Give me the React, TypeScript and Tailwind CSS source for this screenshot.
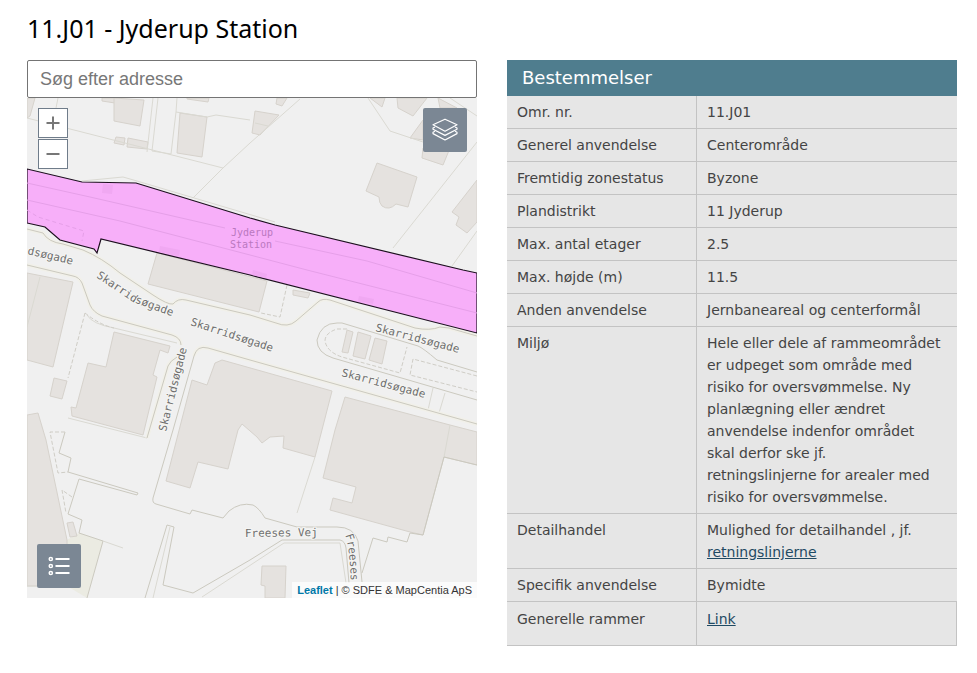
import React from 'react';

type Row = { label: string; value: React.ReactNode };

const rows: Row[] = [
  { label: 'Omr. nr.', value: '11.J01' },
  { label: 'Generel anvendelse', value: 'Centerområde' },
  { label: 'Fremtidig zonestatus', value: 'Byzone' },
  { label: 'Plandistrikt', value: '11 Jyderup' },
  { label: 'Max. antal etager', value: '2.5' },
  { label: 'Max. højde (m)', value: '11.5' },
  { label: 'Anden anvendelse', value: 'Jernbaneareal og centerformål' },
  {
    label: 'Miljø',
    value: (
      <>
        Hele eller dele af rammeområdet er udpeget som område med risiko for oversvømmelse. Ny planlægning eller ændret
        anvendelse indenfor området skal derfor ske jf.
        <br />
        retningslinjerne for arealer med risiko for oversvømmelse.
      </>
    ),
  },
  {
    label: 'Detailhandel',
    value: (
      <>
        Mulighed for detailhandel , jf. <a href="#retningslinjer" className="text-[#1f4a63] underline">retningslinjerne</a>
      </>
    ),
  },
  { label: 'Specifik anvendelse', value: 'Bymidte' },
];

const buildings = [
  '27,98 35,98 30,116 27,118',
  '102,98 116,98 115,103 102,101',
  '114,98 144,100 140,126 114,121',
  '180,113 207,117 202,157 177,153',
  '187,98 209,98 208,102 187,99',
  '116,137 125,138 124,145 114,143',
  '128,138 148,142 147,149 127,147',
  '255,111 279,115 260,135 252,133',
  '277,98 287,98 282,106 276,104',
  '370,98 385,98 382,107',
  '397,98 427,98 413,116 398,108',
  '438,98 457,108 440,108',
  '410,138 423,120 423,140',
  '423,148 450,148 443,165 422,158',
  '477,180 452,212 459,217 456,225 467,233 477,222',
  '157,253 148,284 259,312 267,281',
  '293,290 310,293 308,298 293,295',
  '347,330 353,332 348,353 342,352',
  '358,332 371,336 365,359 353,356',
  '375,338 387,341 382,364 369,360',
  '27,273 73,282 53,367 27,360',
  '54,378 67,381 62,399 50,396',
  '114,332 170,346 168,353 160,350 153,375 157,377 143,435 72,416 71,407 76,408 88,363 106,367',
  '27,415 38,413 46,440 67,540 67,586 27,586',
  '67,523 73,522 77,536 70,537',
  '192,380 207,385 215,363 222,360 332,391 315,457 283,448 284,436 270,437 262,443 257,437 242,424 238,430 228,469 198,462 190,488 166,481',
  '345,397 450,425 477,432 477,465 444,457 423,535 410,532 330,510 333,498 352,503 356,487 323,478 335,430',
  '262,566 286,566 285,598 265,598 265,586 261,585',
];

const parcels = [
  'M27,118 L223,168 L193,198',
  'M223,168 L250,143 L300,99',
  'M58,98 L55,113',
  'M153,98 L147,152',
  'M158,98 L152,151 L171,154 L176,112 L177,98',
  'M176,112 L207,117 L216,115 L250,120',
  'M82,181 L123,177 L137,181 L275,222',
  'M368,98 L390,131 L423,142',
  'M450,98 L477,116',
  'M477,142 L393,248',
  'M477,231 L452,266',
  'M255,123 L268,126',
  'M40,277 L27,327',
  'M315,457 L297,513',
  'M450,425 L444,457',
  'M87,315 Q92,324 114,328 L177,343',
  'M68,418 L147,438',
  'M103,541 L123,548',
  'M433,388 L428,410',
  'M445,393 L439,413',
  'M170,527 L153,598',
  'M202,597 L284,543 L340,543 L346,583',
  'M27,586 L80,586',
];

const roads = [
  'M27,229 L43,233 Q48,242 63,244 L83,250 Q102,258 120,273 L153,295 Q168,305 173,304 Q178,298 186,300 L250,315 L276,323 Q288,328 296,321 L318,302 Q322,298 330,300 L415,328 Q430,331 440,327 L449,328 L477,336',
  'M27,265 L73,276 Q79,277 82,283 L90,305 Q93,312 102,316 L172,335 Q181,338 181,345',
  'M177,357 Q170,361 168,366 L147,438',
  'M194,356 Q197,345 208,348 L250,360 L477,424',
  'M194,356 L173,430 L153,498 Q152,503 156,504 L190,514 L192,510 L223,518 L229,511 Q240,502 253,505 Q259,508 265,518 L297,527 L337,527 Q354,527 358,541 L362,582',
  'M477,400 L333,358 Q317,353 317,340 Q321,323 337,323 L342,323 L418,346 Q423,348 437,360 L477,372',
  'M145,598 L167,525 L174,527 L163,585 L193,593 L250,560 L282,540 L340,540 Q345,541 346,548 L349,583',
  'M362,573 L373,538 L387,542 L388,537 L407,542 L410,533 L423,535 L444,457 L477,465',
  'M65,432 L59,453 L71,458 L68,472 L138,493 L137,495 L79,479',
];

const dashed = [
  'M287,285 L280,317 L261,313',
  'M85,313 L68,378',
  'M85,313 Q100,325 114,328',
  'M347,329 L337,329 Q325,333 325,341 Q327,352 342,357 L400,373 L407,347',
  'M477,376 L413,359 L410,375 L477,392',
  'M65,432 L50,432 L58,473 L68,472',
  'M72,497 L62,490 L66,513',
];

// label text runs along these lines
const labels = [
  { id: 'street-west', d: 'M27,254 L82,267', text: 'dsøgade' },
  { id: 'street-mid', d: 'M96,277 L133,302 L185,321', text: 'Skarridsøgade' },
  { id: 'street-mid-east', d: 'M190,325 L285,356', text: 'Skarridsøgade' },
  { id: 'street-north', d: 'M375,331 L470,356', text: 'Skarridsøgade' },
  { id: 'street-south', d: 'M341,376 L436,401', text: 'Skarridsøgade' },
  { id: 'street-side', d: 'M166,432 L189,340', text: 'Skarridsøgade' },
  { id: 'freeses-vej', d: 'M245,537 L325,536', text: 'Freeses Vej' },
  { id: 'freeses-south', d: 'M345,535 Q350,545 351,590', text: 'Freeses' },
];

const area =
  'M27,169 L82,182 L136,183 L250,218 L275,225 L463,270 L477,273 L477,333 L250,275 L101,239 L97,253 L94,249 L60,240 L45,227 L27,223 Z';

const StationMap: React.FC = () => (
  <svg
    viewBox="27 98 450 500"
    preserveAspectRatio="xMidYMid slice"
    className="block h-full w-full"
    role="img"
    aria-label="Kort over Jyderup Station"
  >
    <path d="M27,98 H477 V598 H27 Z" fill="#f0f0f0" />
    <path d="M79,533 L103,541 L87,598 L67,586 L67,540 Z" fill="#ebebe2" />
    <path d="M79,479 L68,514 L82,520 L79,533 L103,541 L87,598" fill="none" stroke="#cbc9bf" />
    <g fill="#e5e2df" stroke="#d6d2cc">
      {buildings.map((points) => (
        <polygon key={points} points={points} />
      ))}
      <path d="M377,163 L417,177 L408,207 L396,204 Q389,211 382,206 Q379,203 379,197 L366,191 Z" />
    </g>
    <g fill="none" stroke="#dad9d2">
      {parcels.map((d) => (
        <path key={d} d={d} />
      ))}
    </g>
    <g fill="none" stroke="#f1f0e9" strokeWidth="4">
      {roads.slice(0, 4).map((d) => (
        <path key={d} d={d} />
      ))}
    </g>
    <g fill="none" stroke="#cbc9bf">
      {roads.map((d) => (
        <path key={d} d={d} />
      ))}
    </g>
    <g fill="none" stroke="#cfcdc6" strokeDasharray="4 2">
      {dashed.map((d) => (
        <path key={d} d={d} />
      ))}
    </g>

    <path d={area} fill="#f7aff9" stroke="#1c0f1e" strokeWidth="1.2" />
    <g fill="none" stroke="#e59fe8">
      <path d="M27,183 L90,197 L225,228" />
      <path d="M27,200 L120,221 L250,255 L307,270 L477,313" />
      <path d="M275,241 L367,261 L477,293" />
      <path d="M27,210 L38,217 L84,231 L82,241" strokeDasharray="4 3" />
    </g>
    <g fill="#f0a8f2">
      <path d="M103,184 L113,185 L112,194 L102,193 Z" />
      <path d="M253,270 L267,274 L266,278 L252,275 Z" />
      <path d="M359,296 L374,299 L373,304 L358,301 Z" />
      <path d="M160,246 L180,250 L179,256 L159,252 Z" />
    </g>

    <g className="font-['DejaVu_Sans_Mono',monospace] text-[11px]" fill="#6e6e6e" stroke="#f5f5f3" strokeWidth="2" paintOrder="stroke">
      {labels.map(({ id, d, text }) => (
        <React.Fragment key={id}>
          <path id={id} d={d} fill="none" stroke="none" />
          <text>
            <textPath href={`#${id}`}>{text}</textPath>
          </text>
        </React.Fragment>
      ))}
    </g>
    <g className="font-['DejaVu_Sans_Mono',monospace] text-[10px]" fill="#ba78bf" textAnchor="middle">
      <text x="252" y="236">Jyderup</text>
      <text x="251" y="248">Station</text>
    </g>
  </svg>
);

export default function App() {
  return (
    <main className="min-h-screen bg-white pt-3 pr-5 pb-7 pl-[27px]">
      <h1 className="mb-4 font-['Trebuchet_MS','Noto_Sans',sans-serif] text-[25px] leading-8 text-black">
        11.J01 - Jyderup Station
      </h1>

      <div className="grid grid-cols-2 items-start gap-[30px]">
        <section className="font-['Liberation_Sans',Arial,sans-serif]">
          <input
            type="text"
            aria-label="Søg efter adresse"
            placeholder="Søg efter adresse"
            className="block h-[38px] w-full rounded-[2px] border border-[#747474] bg-white px-3 text-lg text-[#333] placeholder:text-[#777]"
          />
          <div className="relative h-[500px] overflow-hidden bg-[#f0f0f0]">
            <StationMap />

            <div className="absolute top-2.5 left-[11px] flex flex-col gap-px">
              <button aria-label="Zoom ind" className="flex h-[30px] w-[30px] items-center justify-center border border-[#6f7c8a] bg-white">
                <svg width="14" height="14" viewBox="0 0 14 14" stroke="#777" strokeWidth="2">
                  <path d="M0.5 7H13.5M7 0.5V13.5" />
                </svg>
              </button>
              <button aria-label="Zoom ud" className="flex h-[30px] w-[30px] items-center justify-center border border-[#6f7c8a] bg-white">
                <svg width="14" height="14" viewBox="0 0 14 14" stroke="#777" strokeWidth="2">
                  <path d="M0.5 7H13.5" />
                </svg>
              </button>
            </div>

            <button aria-label="Kortlag" className="absolute top-2.5 right-2.5 flex h-11 w-11 items-center justify-center rounded-[2px] bg-[#7b8794]">
              <svg width="26" height="24" viewBox="0 0 26 24" fill="none" stroke="#fff" strokeWidth="1.2" strokeLinejoin="round">
                <path d="M13 1.2L25 6.8L13 13.2L1 6.8Z" />
                <path d="M3 9L1 10V11.2L13 17.4L25 11.2V10L23 9" />
                <path d="M3 13.2L1 14.2V15.6L13 22L25 15.6V14.2L23 13.2" />
              </svg>
            </button>

            <button aria-label="Signaturforklaring" className="absolute bottom-2.5 left-2.5 flex h-11 w-11 items-center justify-center rounded-[2px] bg-[#7b8794]">
              <svg width="22" height="20" viewBox="0 0 22 20" fill="none" stroke="#fff">
                <g strokeWidth="1.5">
                  <circle cx="2.8" cy="3" r="1.6" />
                  <circle cx="2.8" cy="10" r="1.6" />
                  <circle cx="2.8" cy="17" r="1.6" />
                </g>
                <path d="M7.5 3H21.5M7.5 10H21.5M7.5 17H21.5" strokeWidth="2" />
              </svg>
            </button>

            <div className="absolute right-0 bottom-0 bg-white/70 px-[5px] text-[11px] leading-4 text-[#333]">
              <a href="#leaflet" className="font-bold text-[#0078a8]">Leaflet</a> | © SDFE &amp; MapCentia ApS
            </div>
          </div>
        </section>

        <table className="w-full table-fixed border-separate border-spacing-0 bg-[#e6e6e6] font-[Verdana,'DejaVu_Sans',sans-serif] text-sm leading-[22px] text-[#444]">
          <colgroup>
            <col className="w-[190px]" />
            <col />
          </colgroup>
          <thead>
            <tr>
              <th colSpan={2} className="h-9 bg-[#4f7d8e] px-[15px] text-left text-lg leading-6 font-normal text-white">
                Bestemmelser
              </th>
            </tr>
          </thead>
          <tbody>
            {rows.map((row) => (
              <tr key={row.label}>
                <th scope="row" className="border-r border-b border-[#c3c3c3] px-2.5 py-[5px] text-left align-top font-normal">
                  {row.label}
                </th>
                <td className="border-b border-[#c3c3c3] py-[5px] pr-3.5 pl-2.5 align-top">{row.value}</td>
              </tr>
            ))}
            <tr>
              <th scope="row" className="h-11 border-r border-b border-[#c3c3c3] px-2.5 py-1.5 text-left align-top font-normal">
                Generelle rammer
              </th>
              <td className="border-r border-b border-[#c3c3c3] px-2.5 py-1.5 align-top">
                <a href="#rammer" className="text-[#1f4a63] underline">Link</a>
              </td>
            </tr>
          </tbody>
        </table>
      </div>
    </main>
  );
}
